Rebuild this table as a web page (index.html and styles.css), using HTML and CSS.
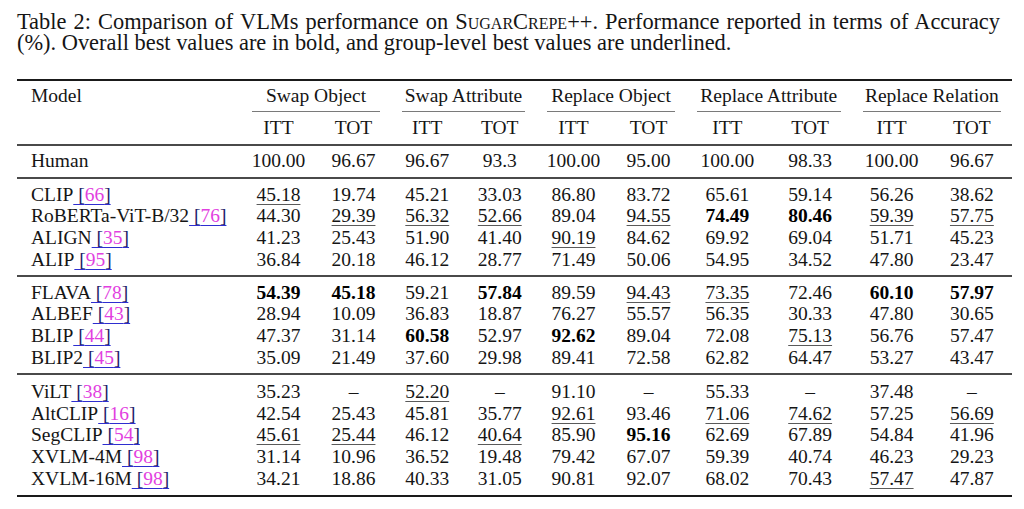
FILE: index.html
```html
<!DOCTYPE html>
<html>
<head>
<meta charset="utf-8">
<link rel="stylesheet" href="styles.css">
</head>
<body>
<div class="page">
  <p class="caption">Table 2: Comparison of VLMs performance on <span class="sc">SugarCrepe++</span>. Performance reported in terms of Accuracy (%). Overall best values are in bold, and group-level best values are underlined.</p>
  <table class="results">
    <colgroup>
      <col class="c-model">
      <col class="c-so"><col class="c-so">
      <col class="c-sa"><col class="c-sa">
      <col class="c-ro"><col class="c-ro">
      <col class="c-ra"><col class="c-ra">
      <col class="c-rr"><col class="c-rr">
    </colgroup>
    <thead>
      <tr class="h1">
        <th class="model">Model</th>
        <th colspan="2"><div class="grp">Swap Object</div></th>
        <th colspan="2"><div class="grp">Swap Attribute</div></th>
        <th colspan="2"><div class="grp">Replace Object</div></th>
        <th colspan="2"><div class="grp">Replace Attribute</div></th>
        <th colspan="2"><div class="grp">Replace Relation</div></th>
      </tr>
      <tr class="h2">
        <th></th>
        <th>ITT</th><th>TOT</th>
        <th>ITT</th><th>TOT</th>
        <th>ITT</th><th>TOT</th>
        <th>ITT</th><th>TOT</th>
        <th>ITT</th><th>TOT</th>
      </tr>
    </thead>
    <tbody class="human">
      <tr>
        <td class="model">Human</td>
        <td>100.00</td><td>96.67</td><td>96.67</td><td>93.3</td><td>100.00</td><td>95.00</td><td>100.00</td><td>98.33</td><td>100.00</td><td>96.67</td>
      </tr>
    </tbody>
    <tbody class="grp1">
      <tr>
        <td class="model">CLIP<span class="cite">&nbsp;[<span class="cn">66</span>]</span></td>
        <td><u>45.18</u></td><td>19.74</td><td>45.21</td><td>33.03</td><td>86.80</td><td>83.72</td><td>65.61</td><td>59.14</td><td>56.26</td><td>38.62</td>
      </tr>
      <tr>
        <td class="model">RoBERTa-ViT-B/32<span class="cite">&nbsp;[<span class="cn">76</span>]</span></td>
        <td>44.30</td><td><u>29.39</u></td><td><u>56.32</u></td><td><u>52.66</u></td><td>89.04</td><td><u>94.55</u></td><td><b>74.49</b></td><td><b>80.46</b></td><td><u>59.39</u></td><td><u>57.75</u></td>
      </tr>
      <tr>
        <td class="model">ALIGN<span class="cite">&nbsp;[<span class="cn">35</span>]</span></td>
        <td>41.23</td><td>25.43</td><td>51.90</td><td>41.40</td><td><u>90.19</u></td><td>84.62</td><td>69.92</td><td>69.04</td><td>51.71</td><td>45.23</td>
      </tr>
      <tr>
        <td class="model">ALIP<span class="cite">&nbsp;[<span class="cn">95</span>]</span></td>
        <td>36.84</td><td>20.18</td><td>46.12</td><td>28.77</td><td>71.49</td><td>50.06</td><td>54.95</td><td>34.52</td><td>47.80</td><td>23.47</td>
      </tr>
    </tbody>
    <tbody class="grp2">
      <tr>
        <td class="model">FLAVA<span class="cite">&nbsp;[<span class="cn">78</span>]</span></td>
        <td><b>54.39</b></td><td><b>45.18</b></td><td>59.21</td><td><b>57.84</b></td><td>89.59</td><td><u>94.43</u></td><td><u>73.35</u></td><td>72.46</td><td><b>60.10</b></td><td><b>57.97</b></td>
      </tr>
      <tr>
        <td class="model">ALBEF<span class="cite">&nbsp;[<span class="cn">43</span>]</span></td>
        <td>28.94</td><td>10.09</td><td>36.83</td><td>18.87</td><td>76.27</td><td>55.57</td><td>56.35</td><td>30.33</td><td>47.80</td><td>30.65</td>
      </tr>
      <tr>
        <td class="model">BLIP<span class="cite">&nbsp;[<span class="cn">44</span>]</span></td>
        <td>47.37</td><td>31.14</td><td><b>60.58</b></td><td>52.97</td><td><b>92.62</b></td><td>89.04</td><td>72.08</td><td><u>75.13</u></td><td>56.76</td><td>57.47</td>
      </tr>
      <tr>
        <td class="model">BLIP2<span class="cite">&nbsp;[<span class="cn">45</span>]</span></td>
        <td>35.09</td><td>21.49</td><td>37.60</td><td>29.98</td><td>89.41</td><td>72.58</td><td>62.82</td><td>64.47</td><td>53.27</td><td>43.47</td>
      </tr>
    </tbody>
    <tbody class="grp3">
      <tr>
        <td class="model">ViLT<span class="cite">&nbsp;[<span class="cn">38</span>]</span></td>
        <td>35.23</td><td>–</td><td><u>52.20</u></td><td>–</td><td>91.10</td><td>–</td><td>55.33</td><td>–</td><td>37.48</td><td>–</td>
      </tr>
      <tr>
        <td class="model">AltCLIP<span class="cite">&nbsp;[<span class="cn">16</span>]</span></td>
        <td>42.54</td><td>25.43</td><td>45.81</td><td>35.77</td><td><u>92.61</u></td><td>93.46</td><td><u>71.06</u></td><td><u>74.62</u></td><td>57.25</td><td><u>56.69</u></td>
      </tr>
      <tr>
        <td class="model">SegCLIP<span class="cite">&nbsp;[<span class="cn">54</span>]</span></td>
        <td><u>45.61</u></td><td><u>25.44</u></td><td>46.12</td><td><u>40.64</u></td><td>85.90</td><td><b>95.16</b></td><td>62.69</td><td>67.89</td><td>54.84</td><td>41.96</td>
      </tr>
      <tr>
        <td class="model">XVLM-4M<span class="cite">&nbsp;[<span class="cn">98</span>]</span></td>
        <td>31.14</td><td>10.96</td><td>36.52</td><td>19.48</td><td>79.42</td><td>67.07</td><td>59.39</td><td>40.74</td><td>46.23</td><td>29.23</td>
      </tr>
      <tr>
        <td class="model">XVLM-16M<span class="cite">&nbsp;[<span class="cn">98</span>]</span></td>
        <td>34.21</td><td>18.86</td><td>40.33</td><td>31.05</td><td>90.81</td><td>92.07</td><td>68.02</td><td>70.43</td><td><u>57.47</u></td><td>47.87</td>
      </tr>
    </tbody>
  </table>
</div>
</body>
</html>
```

FILE: styles.css
```css
html, body {
  margin: 0;
  padding: 0;
  background: #ffffff;
}

body {
  font-family: "Liberation Serif", "Times New Roman", serif;
  color: #111111;
}

.page {
  width: 1024px;
  height: 509px;
  overflow: hidden;
}

.caption {
  margin: 10.5px 0 0 17px;
  width: 983px;
  font-size: 22.4px;
  line-height: 21px;
  text-align: justify;
  color: #151515;
}

.sc {
  display: inline-block;
  line-height: 21px;
  height: 21px;
  font-variant: small-caps;
}

.results {
  margin: 26.5px 0 0 17px;
  width: 995px;
  table-layout: fixed;
  border-collapse: separate;
  border-spacing: 0;
  border-top: 2px solid #1a1a1a;
  border-bottom: 2px solid #1a1a1a;
  font-size: 19.5px;
  color: #151515;
}

.c-model { width: 224px; }
.c-so { width: 75px; }
.c-sa { width: 72.5px; }
.c-ro { width: 75px; }
.c-ra { width: 82.75px; }
.c-rr { width: 80.25px; }

.results th,
.results td {
  padding: 0;
  text-align: center;
  font-weight: normal;
  line-height: 21.8px;
  white-space: nowrap;
  vertical-align: top;
}

.results .model {
  text-align: left;
  padding-left: 14px;
}

/* header row 1 */
.h1 th {
  padding-top: 4px;
  padding-bottom: 5px;
  line-height: 22px;
}

.h1 th:not(.model) {
  padding: 0;
}

.grp {
  margin: 0 11px;
  padding: 4px 0 4px;
  line-height: 22px;
  border-bottom: 1px solid #7a7a7a;
}

/* header row 2 */
.h2 th {
  padding-top: 5px;
  padding-bottom: 5px;
  line-height: 22px;
  border-bottom: 2px solid #4a4a4a;
}

/* human row */
.human td {
  padding-top: 4px;
  padding-bottom: 5px;
  line-height: 22px;
  border-bottom: 2px solid #4a4a4a;
}

tbody.grp1 tr:first-child td,
tbody.grp2 tr:first-child td {
  padding-top: 4.5px;
}

tbody.grp1 tr:last-child td,
tbody.grp2 tr:last-child td {
  padding-bottom: 4.5px;
  border-bottom: 2px solid #4a4a4a;
}

tbody.grp3 tr:first-child td {
  padding-top: 5.5px;
}

tbody.grp3 tr:last-child td {
  padding-bottom: 5px;
}

.results u {
  text-decoration: underline;
  text-decoration-color: #5a5a5a;
  text-decoration-thickness: 1px;
  text-underline-offset: 3px;
}

.results b {
  font-weight: bold;
  color: #000000;
}

.cite {
  color: #23236a;
  text-decoration: underline;
  text-decoration-color: #2e2ed0;
  text-decoration-thickness: 1px;
  text-underline-offset: 3px;
}

.cn {
  color: #e23fe0;
}
```
